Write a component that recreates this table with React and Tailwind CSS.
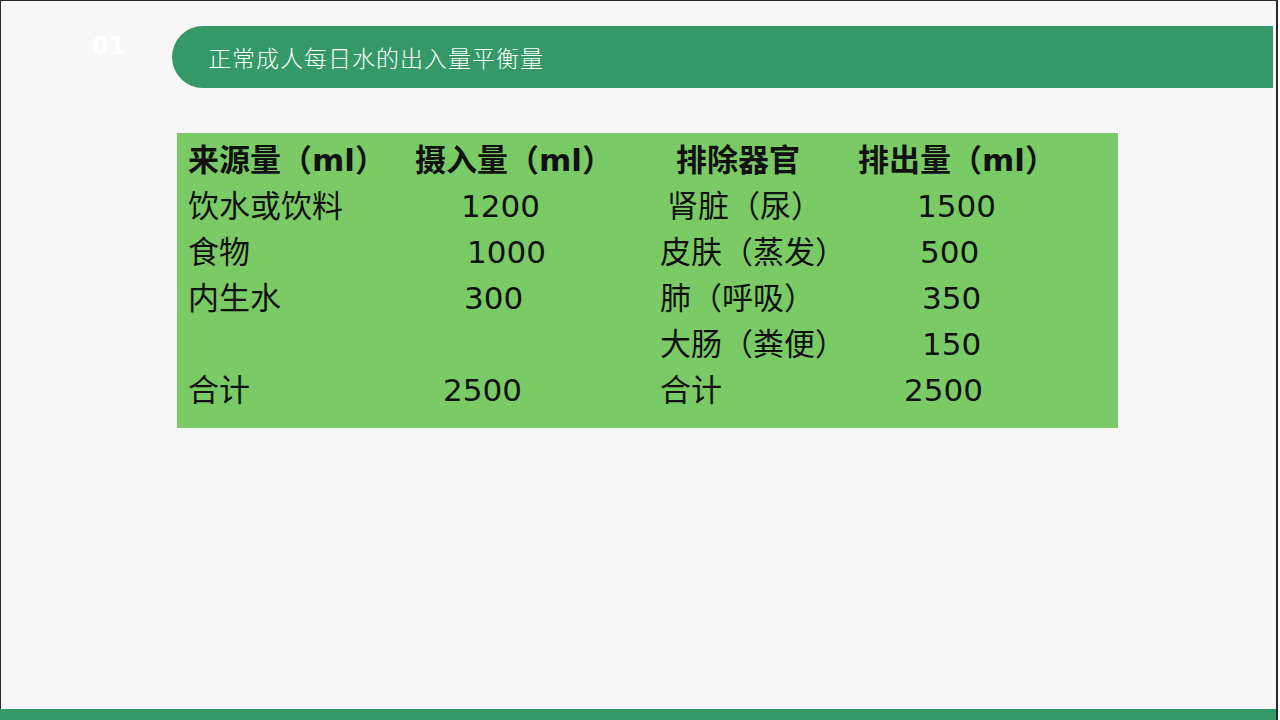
const rows = [
  {
    bold: true,
    cells: [
      { text: '来源量（ml）', pl: 'pl-0' },
      { text: '摄入量（ml）', pl: 'pl-[15px]' },
      { text: '排除器官', pl: 'pl-[26px]' },
      { text: '排出量（ml）', pl: 'pl-[8px]' },
    ],
  },
  {
    cells: [
      { text: '饮水或饮料', pl: 'pl-0' },
      { text: '1200', pl: 'pl-[61px]' },
      { text: '肾脏（尿）', pl: 'pl-[17px]' },
      { text: '1500', pl: 'pl-[67px]' },
    ],
  },
  {
    cells: [
      { text: '食物', pl: 'pl-0' },
      { text: '1000', pl: 'pl-[67px]' },
      { text: '皮肤（蒸发）', pl: 'pl-[10px]' },
      { text: '500', pl: 'pl-[70px]' },
    ],
  },
  {
    cells: [
      { text: '内生水', pl: 'pl-0' },
      { text: '300', pl: 'pl-[64px]' },
      { text: '肺（呼吸）', pl: 'pl-[10px]' },
      { text: '350', pl: 'pl-[72px]' },
    ],
  },
  {
    cells: [
      { text: '', pl: 'pl-0' },
      { text: '', pl: 'pl-0' },
      { text: '大肠（粪便）', pl: 'pl-[10px]' },
      { text: '150', pl: 'pl-[72px]' },
    ],
  },
  {
    cells: [
      { text: '合计', pl: 'pl-0' },
      { text: '2500', pl: 'pl-[43px]' },
      { text: '合计', pl: 'pl-[10px]' },
      { text: '2500', pl: 'pl-[54px]' },
    ],
  },
]

const colWidths = ['w-[212px]', 'w-[250px]', 'w-[200px]', 'w-[250px]']

export default function App() {
  return (
    <div className="w-[1280px] h-[720px] bg-white overflow-hidden">
      <div className="w-[1278px] h-full flex flex-col border-l border-t border-r-2 border-[#2a2a2a] bg-[#f7f7f7] font-['DejaVu_Sans','Noto_Sans_CJK_SC',sans-serif]">
        {/* header */}
        <div className="flex items-start mt-[25px] mr-[3px]">
          <div className="w-[171px] pl-[91px] pt-[8px] text-[24px] font-bold leading-none text-white">01</div>
          <div className="flex-1 h-[62px] flex items-center rounded-l-full bg-[#349967] pl-[36px]">
            <span className="text-[23px] tracking-[1px] text-white font-['Noto_Sans_CJK_SC',sans-serif] font-light">
              正常成人每日水的出入量平衡量
            </span>
          </div>
        </div>

        {/* table */}
        <div className="mt-[45px] ml-[176px] w-[941px] bg-[#7acb66] pt-[4px] pb-[15px] pl-[11px]">
          {rows.map((row, i) => (
            <div key={i} className={`flex h-[46px] items-center text-[31px] leading-none text-[#111] ${row.bold ? 'font-bold' : ''}`}>
              {row.cells.map((cell, j) => (
                <div key={j} className={`${colWidths[j]} ${cell.pl} whitespace-nowrap`}>
                  {cell.text}
                </div>
              ))}
            </div>
          ))}
        </div>

        <div className="mt-auto h-[11px] -ml-px bg-[#349967]" />
      </div>
    </div>
  )
}
